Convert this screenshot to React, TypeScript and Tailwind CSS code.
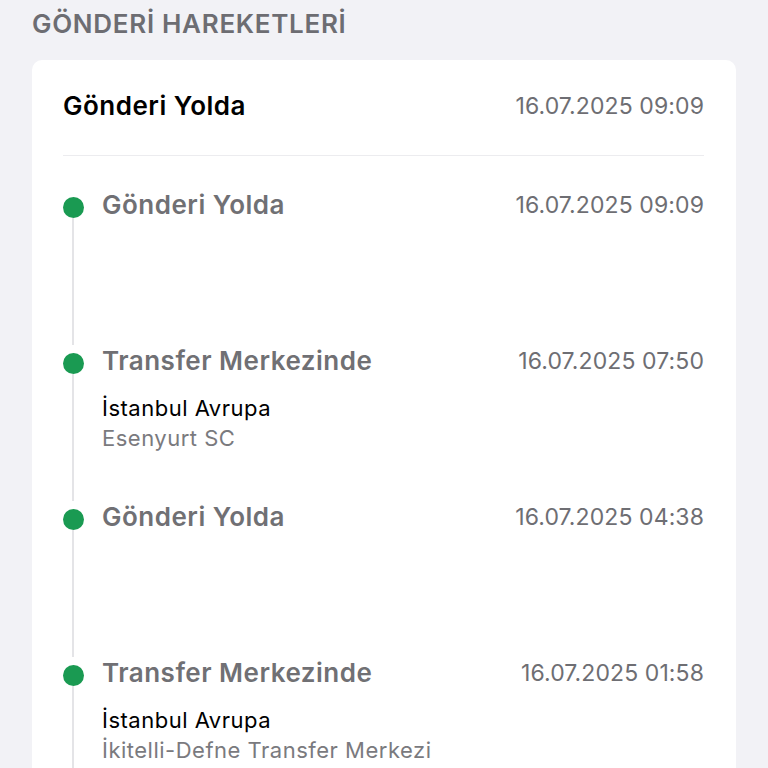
type Hareket = {
  baslik: string;
  tarih: string;
  il?: string;
  sube?: string;
};

const hareketler: Hareket[] = [
  { baslik: "Gönderi Yolda", tarih: "16.07.2025 09:09" },
  { baslik: "Transfer Merkezinde", tarih: "16.07.2025 07:50", il: "İstanbul Avrupa", sube: "Esenyurt SC" },
  { baslik: "Gönderi Yolda", tarih: "16.07.2025 04:38" },
  {
    baslik: "Transfer Merkezinde",
    tarih: "16.07.2025 01:58",
    il: "İstanbul Avrupa",
    sube: "İkitelli-Defne Transfer Merkezi",
  },
];

export default function App() {
  return (
    <div
      className="min-h-[768px] h-[768px] overflow-hidden bg-[#f2f2f6] px-8 pt-[8px]"
      style={{ fontFamily: "Inter, 'Noto Sans', sans-serif" }}
    >
      <h2 className="text-[26px] leading-[32px] font-semibold text-[#6d6d72] tracking-[0.7px]">
        GÖNDERİ HAREKETLERİ
      </h2>

      <div className="mt-[20px] bg-white rounded-[10px] pl-[31px] pr-8 pt-[29px]">
        <div className="flex items-center justify-between">
          <span className="text-[26px] leading-[34px] font-semibold text-black tracking-[0.5px]">
            Gönderi Yolda
          </span>
          <span className="text-[23px] leading-[34px] text-[#6e6e73] tracking-[0.1px]">16.07.2025 09:09</span>
        </div>
        <div className="mt-[32px] h-px bg-[#ececef]" />

        <div className="pt-[33px]">
          {hareketler.map((h, i) => (
            <div key={i} className="flex h-[156px] gap-[19px]">
              <div className="flex w-[20px] flex-col items-center pt-[8px]">
                <div className="h-[21px] w-[21px] shrink-0 rounded-full bg-[#1a9a52]" />
                <div className="w-[2px] flex-1 bg-[#e4e4e7]" />
              </div>
              <div className="flex-1">
                <div className="flex items-center justify-between">
                  <span className="text-[26px] leading-[32px] font-semibold text-[#707074] tracking-[0.5px]">
                    {h.baslik}
                  </span>
                  <span className="text-[23px] leading-[32px] text-[#6e6e73] tracking-[0.1px]">{h.tarih}</span>
                </div>
                {h.il && (
                  <div className="mt-[16px]">
                    <div className="text-[22px] leading-[30px] text-black tracking-[0.5px]">{h.il}</div>
                    <div className="text-[22px] leading-[30px] text-[#7a7a7e] tracking-[0.5px]">{h.sube}</div>
                  </div>
                )}
              </div>
            </div>
          ))}
        </div>
      </div>
    </div>
  );
}
